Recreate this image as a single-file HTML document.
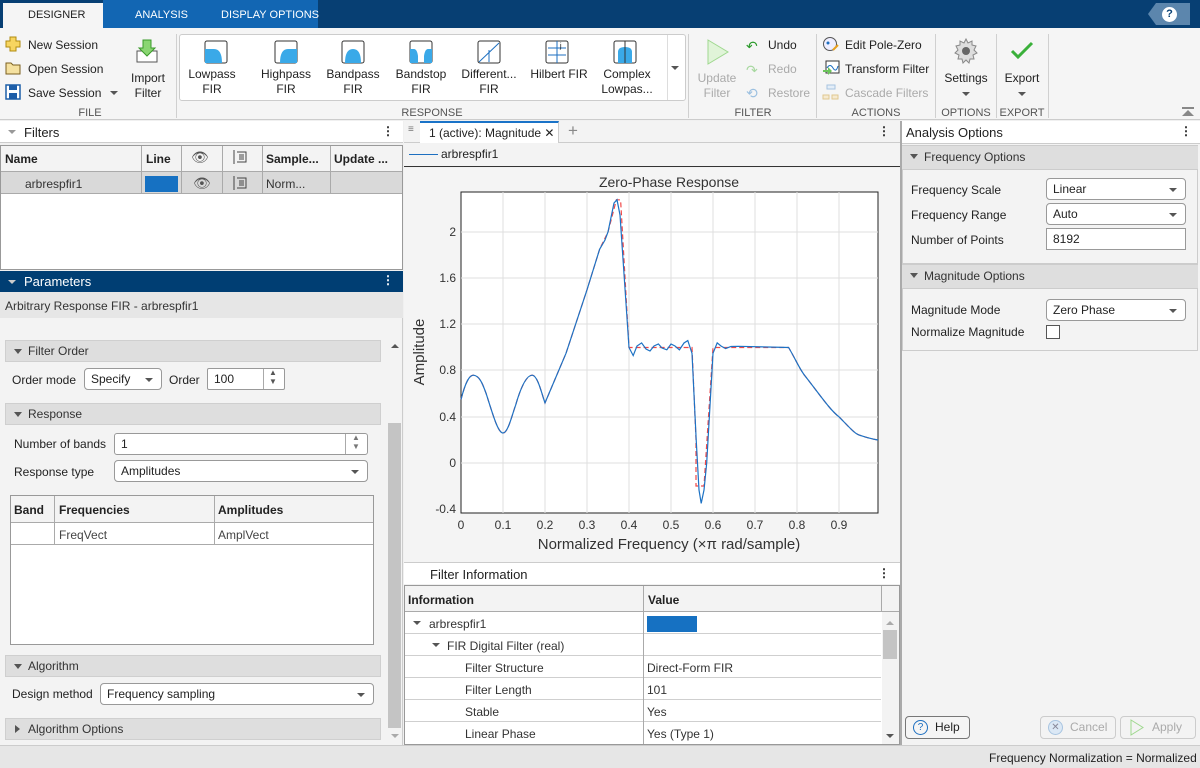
<!DOCTYPE html>
<html><head><meta charset="utf-8"><style>
*{box-sizing:border-box;margin:0;padding:0}
body{width:1200px;height:768px;position:relative;overflow:hidden;background:#f0f0f0;font-family:"Liberation Sans",Arial,sans-serif;font-size:12px;color:#222}
.a{position:absolute}
.t{position:absolute;white-space:nowrap}
.grp{position:absolute;top:107px;font-size:11px;color:#555;text-align:center}
.sep{position:absolute;top:34px;width:1px;height:84px;background:#d0d0d0}
.btn{position:absolute;text-align:center;font-size:12px;line-height:15px;color:#222}
.sec{position:absolute;background:#dedede;border:1px solid #cfcfcf;height:22px;font-size:12px;line-height:20px;padding-left:22px;color:#333}
.sec:before{content:"";position:absolute;left:8px;top:8px;border-left:4px solid transparent;border-right:4px solid transparent;border-top:5px solid #555}
.sec.cl:before{left:9px;top:6px;border-top:4px solid transparent;border-bottom:4px solid transparent;border-left:5px solid #555;border-right:none}
.dd{position:absolute;background:#fff;border:1px solid #999;border-radius:4px;height:22px;line-height:20px;padding-left:6px;font-size:12px}
.dd:after{content:"";position:absolute;right:8px;top:9px;border-left:4px solid transparent;border-right:4px solid transparent;border-top:4px solid #555}
.ed{position:absolute;background:#fff;border:1px solid #999;height:22px;line-height:20px;padding-left:6px}
.row{position:absolute;left:405px;width:476px;height:22px;border-bottom:1px solid #cfcfcf;background:#fff;line-height:21px}
</style></head><body>
<!-- top bar -->
<div class="a" style="left:0;top:0;width:1200px;height:28px;background:#073f73"></div>
<div class="a" style="left:103px;top:0;width:215px;height:28px;background:#1266b3"></div>
<div class="a" style="left:3px;top:3px;width:100px;height:26px;background:#f5f5f5"></div>
<div class="t" style="left:28px;top:9px;font-size:11px;color:#222">DESIGNER</div>
<div class="t" style="left:135px;top:9px;font-size:11px;color:#fff">ANALYSIS</div>
<div class="t" style="left:221px;top:9px;font-size:11px;color:#fff">DISPLAY OPTIONS</div>
<div class="a" style="left:1148px;top:3px;width:42px;height:22px;background:#5c86ad;clip-path:polygon(8px 0,100% 0,100% 100%,8px 100%,0 50%)"></div>
<div class="a" style="left:1162px;top:7px;width:15px;height:15px;border-radius:50%;background:#fff;color:#073f73;font-weight:bold;font-size:11px;text-align:center;line-height:15px">?</div>
<!-- toolstrip -->
<div class="a" style="left:0;top:28px;width:1200px;height:92px;background:#f5f5f5;border-bottom:1px solid #ccc"></div>
<svg class="a" style="left:5px;top:36px" width="16" height="16"><path d="M5 1h6v4h4v6h-4v4H5v-4H1V5h4z" fill="#f7d560" stroke="#b08a10"/></svg>
<div class="t" style="left:28px;top:38px">New Session</div>
<svg class="a" style="left:5px;top:60px" width="16" height="16"><path d="M1 3h5l2 2h7v9H1z" fill="#f5e1a0" stroke="#7a6020"/></svg>
<div class="t" style="left:28px;top:62px">Open Session</div>
<svg class="a" style="left:5px;top:84px" width="16" height="16"><rect x="1" y="1" width="14" height="14" fill="#fff" stroke="#1d5ea8" stroke-width="1.5"/><rect x="4" y="1" width="8" height="5" fill="#1d5ea8"/><rect x="4" y="9" width="8" height="6" fill="#1d5ea8"/></svg>
<div class="t" style="left:28px;top:86px">Save Session</div>
<div class="a" style="left:110px;top:91px;border-left:4px solid transparent;border-right:4px solid transparent;border-top:4px solid #555"></div>
<svg class="a" style="left:135px;top:38px" width="26" height="26"><rect x="2" y="13" width="20" height="11" fill="#fff" stroke="#555"/><path d="M8 2h8v8h4l-8 8-8-8h4z" fill="#8ad672" stroke="#3a9a2a"/></svg>
<div class="btn" style="left:125px;top:71px;width:46px">Import<br>Filter</div>
<div class="grp" style="left:70px;width:40px">FILE</div>
<div class="sep" style="left:176px"></div>
<div class="a" style="left:179px;top:34px;width:507px;height:67px;border:1px solid #ccc;border-radius:3px;background:#fff"></div>
<div class="a" style="left:667px;top:35px;width:18px;height:65px;border-left:1px solid #ddd"></div>
<div class="a" style="left:671px;top:66px;border-left:4px solid transparent;border-right:4px solid transparent;border-top:4px solid #555"></div>
<svg class="a" style="left:204px;top:40px" width="24" height="24"><rect x="1" y="1" width="22" height="22" rx="2" fill="#fff" stroke="#333"/><path d="M1 9h9q8 0 8 14H1z" fill="#3aa9e8"/></svg>
<svg class="a" style="left:274px;top:40px" width="24" height="24"><rect x="1" y="1" width="22" height="22" rx="2" fill="#fff" stroke="#333"/><path d="M23 9h-9q-8 0-8 14h17z" fill="#3aa9e8"/></svg>
<svg class="a" style="left:341px;top:40px" width="24" height="24"><rect x="1" y="1" width="22" height="22" rx="2" fill="#fff" stroke="#333"/><path d="M4 23q0-14 8-14t8 14z" fill="#3aa9e8"/></svg>
<svg class="a" style="left:409px;top:40px" width="24" height="24"><rect x="1" y="1" width="22" height="22" rx="2" fill="#fff" stroke="#333"/><path d="M1 9h4q3 0 4 7v7h6v-7q1-7 4-7h4v14H1z" fill="#3aa9e8"/></svg>
<svg class="a" style="left:477px;top:40px" width="24" height="24"><rect x="1" y="1" width="22" height="22" rx="2" fill="#fff" stroke="#333"/><path d="M2 22L22 3M12 10v12" stroke="#1d6fc0"/></svg>
<svg class="a" style="left:545px;top:40px" width="24" height="24"><rect x="1" y="1" width="22" height="22" rx="2" fill="#fff" stroke="#333"/><path d="M3 8h18M3 15h18M12 1v22" stroke="#1d6fc0"/><text x="15" y="8" font-size="7">j</text></svg>
<svg class="a" style="left:613px;top:40px" width="24" height="24"><rect x="1" y="1" width="22" height="22" rx="2" fill="#fff" stroke="#333"/><path d="M5 23V12q0-5 7-5t7 5v11z" fill="#3aa9e8"/><path d="M12 1v22" stroke="#333"/></svg>
<div class="btn" style="left:186px;top:67px;width:52px">Lowpass<br>FIR</div>
<div class="btn" style="left:256px;top:67px;width:60px">Highpass<br>FIR</div>
<div class="btn" style="left:324px;top:67px;width:58px">Bandpass<br>FIR</div>
<div class="btn" style="left:392px;top:67px;width:58px">Bandstop<br>FIR</div>
<div class="btn" style="left:458px;top:67px;width:62px">Different...<br>FIR</div>
<div class="btn" style="left:528px;top:67px;width:62px">Hilbert FIR</div>
<div class="btn" style="left:596px;top:67px;width:62px">Complex<br>Lowpas...</div>
<div class="grp" style="left:400px;width:64px">RESPONSE</div>
<div class="sep" style="left:688px"></div>
<svg class="a" style="left:706px;top:38px" width="24" height="28"><path d="M2 2l20 12L2 26z" fill="#e0f4d8" stroke="#9fd88f"/></svg>
<div class="btn" style="left:692px;top:71px;width:50px;color:#aaa">Update<br>Filter</div>
<div class="t" style="left:746px;top:38px;color:#2a9a2a;font-size:14px">↶</div><div class="t" style="left:768px;top:38px">Undo</div>
<div class="t" style="left:746px;top:62px;color:#a8d8a0;font-size:14px">↷</div><div class="t" style="left:768px;top:62px;color:#aaa">Redo</div>
<div class="t" style="left:746px;top:85px;color:#9cc0e0;font-size:14px">⟲</div><div class="t" style="left:768px;top:86px;color:#aaa">Restore</div>
<div class="grp" style="left:733px;width:40px">FILTER</div>
<div class="sep" style="left:816px"></div>
<svg class="a" style="left:822px;top:36px" width="18" height="16"><circle cx="8" cy="8" r="6.5" fill="#eef" stroke="#555"/><circle cx="6" cy="7" r="1.5" fill="#1d6fc0"/><path d="M11 14l5-5" stroke="#e8a020" stroke-width="2"/></svg>
<div class="t" style="left:845px;top:38px">Edit Pole-Zero</div>
<svg class="a" style="left:822px;top:60px" width="18" height="16"><rect x="4" y="1" width="13" height="12" fill="#fff" stroke="#333"/><path d="M5 8q3-5 6 0t5-2" stroke="#1d6fc0" fill="none"/><path d="M1 10h5v-3l4 4-4 4v-3H1z" fill="#6ac45a"/></svg>
<div class="t" style="left:845px;top:62px">Transform Filter</div>
<svg class="a" style="left:822px;top:84px" width="18" height="16"><rect x="5" y="1" width="8" height="4" fill="#e4eef8" stroke="#a8c4e0"/><rect x="1" y="11" width="6" height="4" fill="#f6ead0" stroke="#e0c890"/><rect x="10" y="11" width="6" height="4" fill="#f6ead0" stroke="#e0c890"/></svg>
<div class="t" style="left:845px;top:86px;color:#aaa">Cascade Filters</div>
<div class="grp" style="left:848px;width:56px">ACTIONS</div>
<div class="sep" style="left:935px"></div>
<svg class="a" style="left:953px;top:38px" width="26" height="26" viewBox="0 0 26 26"><path d="M13 1l2 4 4-2 0 4 4 1-2 4 3 3-4 2 1 4-4 0-1 4-3-3-3 3-1-4-4 0 1-4-4-2 3-3-2-4 4-1 0-4 4 2z" fill="#ddd" stroke="#888"/><circle cx="13" cy="13" r="4" fill="#666"/></svg>
<div class="btn" style="left:940px;top:71px;width:52px">Settings</div>
<div class="a" style="left:962px;top:92px;border-left:4px solid transparent;border-right:4px solid transparent;border-top:4px solid #555"></div>
<div class="grp" style="left:940px;width:52px">OPTIONS</div>
<div class="sep" style="left:996px"></div>
<svg class="a" style="left:1010px;top:40px" width="24" height="20"><path d="M2 11l6 6L22 3" stroke="#3ab03a" stroke-width="3" fill="none"/></svg>
<div class="btn" style="left:998px;top:71px;width:48px">Export</div>
<div class="a" style="left:1018px;top:92px;border-left:4px solid transparent;border-right:4px solid transparent;border-top:4px solid #555"></div>
<div class="grp" style="left:998px;width:48px">EXPORT</div>
<div class="sep" style="left:1048px"></div>
<div class="a" style="left:1182px;top:107px;width:12px;height:2px;background:#888"></div>
<div class="a" style="left:1182px;top:110px;border-left:6px solid transparent;border-right:6px solid transparent;border-bottom:6px solid #888"></div>

<!-- LEFT PANEL -->
<div class="a" style="left:0;top:121px;width:403px;height:22px;background:#fff;border-bottom:1px solid #ccc"></div>
<div class="a" style="left:8px;top:130px;border-left:4px solid transparent;border-right:4px solid transparent;border-top:4px solid #999"></div>
<div class="t" style="left:24px;top:125px;font-size:13px">Filters</div>
<div class="t" style="left:382px;top:124px;font-weight:bold">⋮</div>
<div class="a" style="left:0;top:145px;width:403px;height:125px;background:#fff;border:1px solid #999"></div>
<div class="a" style="left:1px;top:146px;width:401px;height:26px;background:#f3f3f3;border-bottom:1px solid #aaa"></div>
<div class="a" style="left:1px;top:172px;width:401px;height:22px;background:#d9d9d9;border-bottom:1px solid #aaa"></div>
<div class="a" style="left:141px;top:146px;width:1px;height:48px;background:#aaa"></div>
<div class="a" style="left:181px;top:146px;width:1px;height:48px;background:#aaa"></div>
<div class="a" style="left:222px;top:146px;width:1px;height:48px;background:#aaa"></div>
<div class="a" style="left:262px;top:146px;width:1px;height:48px;background:#aaa"></div>
<div class="a" style="left:330px;top:146px;width:1px;height:48px;background:#aaa"></div>
<div class="t" style="left:5px;top:152px;font-weight:bold">Name</div>
<div class="t" style="left:146px;top:152px;font-weight:bold">Line</div>
<div class="t" style="left:191px;top:149px;font-size:14px;color:#555">👁</div>
<div class="t" style="left:266px;top:152px;font-weight:bold">Sample...</div>
<div class="t" style="left:334px;top:152px;font-weight:bold">Update ...</div>
<div class="t" style="left:25px;top:177px;color:#333">arbrespfir1</div>
<div class="a" style="left:145px;top:176px;width:33px;height:16px;background:#1671c2"></div>
<div class="t" style="left:193px;top:175px;font-size:14px;color:#555">👁</div>
<svg class="a" style="left:232px;top:149px" width="16" height="16"><path d="M2 1v14M5 3h9v10H5M7 6h5M7 8h5M7 10h5" stroke="#444" fill="none"/></svg>
<svg class="a" style="left:232px;top:175px" width="16" height="16"><path d="M2 1v14M5 3h9v10H5M7 6h5M7 8h5M7 10h5" stroke="#444" fill="none"/></svg>
<div class="t" style="left:266px;top:177px;color:#333">Norm...</div>

<div class="a" style="left:0;top:271px;width:403px;height:21px;background:#003e73"></div>
<div class="a" style="left:8px;top:280px;border-left:4px solid transparent;border-right:4px solid transparent;border-top:4px solid #ccc"></div>
<div class="t" style="left:24px;top:274px;font-size:13px;color:#fff">Parameters</div>
<div class="t" style="left:382px;top:273px;color:#fff;font-weight:bold">⋮</div>
<div class="a" style="left:0;top:292px;width:403px;height:26px;background:#e6e6e6"></div>
<div class="t" style="left:5px;top:299px;color:#333">Arbitrary Response FIR - arbrespfir1</div>
<div class="a" style="left:0;top:318px;width:403px;height:427px;background:#f3f3f3;border-right:1px solid #ccc"></div>
<div class="a" style="left:386px;top:338px;width:16px;height:406px;background:#f3f3f3"></div>
<div class="a" style="left:388px;top:423px;width:13px;height:305px;background:#c4c4c4"></div>
<div class="a" style="left:391px;top:344px;border-left:4px solid transparent;border-right:4px solid transparent;border-bottom:4px solid #555"></div>
<div class="a" style="left:391px;top:734px;border-left:4px solid transparent;border-right:4px solid transparent;border-top:4px solid #aaa"></div>

<div class="sec" style="left:5px;top:340px;width:376px">Filter Order</div>
<div class="t" style="left:12px;top:373px">Order mode</div>
<div class="dd" style="left:84px;top:368px;width:78px">Specify</div>
<div class="t" style="left:169px;top:373px">Order</div>
<div class="ed" style="left:207px;top:368px;width:78px;border-radius:2px">100</div>
<div class="a" style="left:263px;top:369px;width:1px;height:20px;background:#aaa"></div>
<div class="t" style="left:269px;top:368px;font-size:8px;color:#555">▲<br>▼</div>
<div class="sec" style="left:5px;top:403px;width:376px">Response</div>
<div class="t" style="left:14px;top:437px">Number of bands</div>
<div class="ed" style="left:114px;top:433px;width:254px;border-radius:3px">1</div>
<div class="a" style="left:345px;top:434px;width:1px;height:20px;background:#aaa"></div>
<div class="t" style="left:352px;top:433px;font-size:8px;color:#777">▲<br>▼</div>
<div class="t" style="left:14px;top:465px">Response type</div>
<div class="dd" style="left:114px;top:460px;width:254px">Amplitudes</div>
<div class="a" style="left:10px;top:495px;width:364px;height:150px;background:#fff;border:1px solid #999"></div>
<div class="a" style="left:11px;top:496px;width:362px;height:27px;background:#f3f3f3;border-bottom:1px solid #aaa"></div>
<div class="a" style="left:11px;top:523px;width:362px;height:22px;border-bottom:1px solid #aaa"></div>
<div class="a" style="left:54px;top:496px;width:1px;height:49px;background:#aaa"></div>
<div class="a" style="left:214px;top:496px;width:1px;height:49px;background:#aaa"></div>
<div class="t" style="left:14px;top:503px;font-weight:bold">Band</div>
<div class="t" style="left:59px;top:503px;font-weight:bold">Frequencies</div>
<div class="t" style="left:218px;top:503px;font-weight:bold">Amplitudes</div>
<div class="t" style="left:59px;top:528px;color:#444">FreqVect</div>
<div class="t" style="left:218px;top:528px;color:#444">AmplVect</div>
<div class="sec" style="left:5px;top:655px;width:376px">Algorithm</div>
<div class="t" style="left:12px;top:687px">Design method</div>
<div class="dd" style="left:100px;top:683px;width:274px">Frequency sampling</div>
<div class="sec cl" style="left:5px;top:718px;width:376px">Algorithm Options</div>

<!-- MIDDLE -->
<div class="a" style="left:404px;top:121px;width:496px;height:22px;background:#f3f3f3;border-bottom:1px solid #ccc"></div>
<div class="t" style="left:408px;top:124px;color:#777;font-size:10px">≡</div>
<div class="a" style="left:420px;top:121px;width:139px;height:23px;background:#fff;border-top:2px solid #1a73c8;border-right:1px solid #ccc"></div>
<div class="t" style="left:429px;top:126px;color:#222">1 (active): Magnitude ✕</div>
<div class="t" style="left:568px;top:121px;font-size:17px;color:#888">+</div>
<div class="t" style="left:878px;top:124px;font-weight:bold">⋮</div>
<div class="a" style="left:404px;top:143px;width:496px;height:24px;background:#f3f3f3;border-bottom:1px solid #333"></div>
<div class="a" style="left:409px;top:154px;width:29px;height:1px;background:#1d6fc0"></div>
<div class="t" style="left:441px;top:147px;color:#222">arbrespfir1</div>
<div class="a" style="left:404px;top:168px;width:496px;height:394px;background:#f4f4f4"></div>
<svg class="a" style="left:404px;top:168px" width="496" height="394" viewBox="404 168 496 394">
<rect x="461" y="192" width="417" height="321" fill="#fff" stroke="#222"/>
<g stroke="#dfdfdf">
<path d="M503 192v321M545 192v321M587 192v321M629 192v321M671 192v321M713 192v321M755 192v321M797 192v321M839 192v321"/>
<path d="M461 232h417M461 278h417M461 324h417M461 370h417M461 417h417M461 463h417"/>
</g>
<g font-family="Liberation Sans,sans-serif" font-size="12" fill="#333" text-anchor="middle">
<text x="461" y="529">0</text><text x="503" y="529">0.1</text><text x="545" y="529">0.2</text><text x="587" y="529">0.3</text><text x="629" y="529">0.4</text><text x="671" y="529">0.5</text><text x="713" y="529">0.6</text><text x="755" y="529">0.7</text><text x="797" y="529">0.8</text><text x="839" y="529">0.9</text>
<text x="669" y="549" font-size="15">Normalized Frequency (×π rad/sample)</text>
<text x="669" y="187" font-size="14">Zero-Phase Response</text>
<g text-anchor="end"><text x="456" y="236">2</text><text x="456" y="282">1.6</text><text x="456" y="328">1.2</text><text x="456" y="374">0.8</text><text x="456" y="421">0.4</text><text x="456" y="467">0</text><text x="456" y="513">-0.4</text></g>
<text x="424" y="352" font-size="15" transform="rotate(-90 424 352)">Amplitude</text>
</g>
<path d="M461 399.5 C466 380 470 375 473.6 375.2 C480 376 483 385 486.2 393.7 C493 415 498 433 503 433 C508 433 512 415 515.6 405.3 C520 390 526 375 532.4 375.2 C538 376 542 395 545 402.9 L566 353.3 L587 289.8 L599.6 249.3 L608 232 L616.4 199.7 L620.6 200 L629 347.5 L671 347.5 L692 347.5 L696 440 L696 486 L704 486 L713 347.5 L788.6 347.5 C796 360 800 370 805.4 376.4 C820 395 830 410 839 416.8 C850 428 855 434 860 435.3 C868 438 872 439 878 440" fill="none" stroke="#f04848" stroke-width="1.2" stroke-dasharray="5 3"/>
<path d="M461 399.5 C466 380 470 375 473.6 375.2 C480 376 483 385 486.2 393.7 C493 415 498 433 503 433 C508 433 512 415 515.6 405.3 C520 390 526 375 532.4 375.2 C538 376 542 395 545 402.9 L566 353.3 L587 289.8 L599.6 249.3 L605 240 L608 232 L614 203 L617 199.7 L620 215 L629 347.5 L633.2 355.6 L637 346 L641.6 342.9 L646 349 L650 351 L654 346 L658.4 344 L662 348 L666.8 349.8 L671 344 L675 346 L679.4 349.8 L684 343 L687.8 340.6 L692 353.3 L696.2 439.9 L699 490 L701.2 503.4 L704 490 L706.7 463 L713 353.3 L717.2 342.9 L721 346 L725.6 348.6 L731 346.5 L738.2 346.3 L788.6 347.5 C796 360 800 370 805.4 376.4 C820 395 830 410 839 416.8 C850 428 855 434 860 435.3 C868 438 872 439 878 440" fill="none" stroke="#1d72c4" stroke-width="1.2"/>
</svg>
<!-- filter information -->
<div class="a" style="left:404px;top:562px;width:496px;height:22px;background:#fff;border-top:1px solid #ccc"></div>
<div class="t" style="left:430px;top:567px;font-size:13px;color:#222">Filter Information</div>
<div class="t" style="left:878px;top:566px;font-weight:bold">⋮</div>
<div class="a" style="left:404px;top:585px;width:496px;height:160px;background:#fff;border:1px solid #999"></div>
<div class="a" style="left:405px;top:586px;width:494px;height:26px;background:#f3f3f3;border-bottom:1px solid #aaa"></div>
<div class="a" style="left:643px;top:586px;width:1px;height:158px;background:#aaa"></div>
<div class="a" style="left:881px;top:586px;width:1px;height:26px;background:#aaa"></div>
<div class="t" style="left:408px;top:593px;font-weight:bold">Information</div>
<div class="t" style="left:648px;top:593px;font-weight:bold">Value</div>
<div class="row" style="top:612px"></div><div class="row" style="top:634px"></div><div class="row" style="top:656px"></div><div class="row" style="top:678px"></div><div class="row" style="top:700px"></div><div class="row" style="top:722px;border-bottom:none"></div>
<div class="a" style="left:643px;top:612px;width:1px;height:132px;background:#aaa"></div>
<div class="a" style="left:413px;top:621px;border-left:4px solid transparent;border-right:4px solid transparent;border-top:4px solid #555"></div>
<div class="t" style="left:429px;top:617px;color:#333">arbrespfir1</div>
<div class="a" style="left:647px;top:616px;width:50px;height:16px;background:#1671c2"></div>
<div class="a" style="left:432px;top:643px;border-left:4px solid transparent;border-right:4px solid transparent;border-top:4px solid #555"></div>
<div class="t" style="left:447px;top:639px;color:#333">FIR Digital Filter (real)</div>
<div class="t" style="left:465px;top:661px;color:#333">Filter Structure</div><div class="t" style="left:647px;top:661px;color:#333">Direct-Form FIR</div>
<div class="t" style="left:465px;top:683px;color:#333">Filter Length</div><div class="t" style="left:647px;top:683px;color:#333">101</div>
<div class="t" style="left:465px;top:705px;color:#333">Stable</div><div class="t" style="left:647px;top:705px;color:#333">Yes</div>
<div class="t" style="left:465px;top:727px;color:#333">Linear Phase</div><div class="t" style="left:647px;top:727px;color:#333">Yes (Type 1)</div>
<div class="a" style="left:882px;top:612px;width:17px;height:132px;background:#f3f3f3"></div>
<div class="a" style="left:883px;top:630px;width:14px;height:29px;background:#c4c4c4"></div>
<div class="a" style="left:886px;top:621px;border-left:4px solid transparent;border-right:4px solid transparent;border-bottom:4px solid #aaa"></div>
<div class="a" style="left:886px;top:734px;border-left:4px solid transparent;border-right:4px solid transparent;border-top:4px solid #555"></div>

<!-- RIGHT -->
<div class="a" style="left:900px;top:121px;width:300px;height:624px;background:#f3f3f3;border-left:2px solid #aaa"></div>
<div class="a" style="left:902px;top:121px;width:298px;height:23px;background:#fff;border-bottom:1px solid #ccc"></div>
<div class="t" style="left:906px;top:125px;font-size:13px">Analysis Options</div>
<div class="t" style="left:1180px;top:124px;font-weight:bold">⋮</div>
<div class="a" style="left:902px;top:145px;width:296px;height:206px;border:1px solid #ccc;background:#f3f3f3"></div>
<div class="sec" style="left:902px;top:146px;width:296px;border:none;border-bottom:1px solid #ccc;height:24px;line-height:23px">Frequency Options</div>
<div class="t" style="left:911px;top:183px">Frequency Scale</div>
<div class="dd" style="left:1046px;top:178px;width:140px">Linear</div>
<div class="t" style="left:911px;top:208px">Frequency Range</div>
<div class="dd" style="left:1046px;top:203px;width:140px">Auto</div>
<div class="t" style="left:911px;top:233px">Number of Points</div>
<div class="ed" style="left:1046px;top:228px;width:140px">8192</div>
<div class="a" style="left:902px;top:263px;width:296px;height:2px;background:#ccc"></div>
<div class="sec" style="left:902px;top:265px;width:296px;border:none;border-bottom:1px solid #ccc;height:24px;line-height:23px">Magnitude Options</div>
<div class="t" style="left:911px;top:303px">Magnitude Mode</div>
<div class="dd" style="left:1046px;top:299px;width:140px">Zero Phase</div>
<div class="t" style="left:911px;top:325px">Normalize Magnitude</div>
<div class="a" style="left:1046px;top:325px;width:14px;height:14px;background:#fff;border:1px solid #555"></div>
<div class="a" style="left:905px;top:716px;width:65px;height:23px;border:1px solid #777;border-radius:4px;background:#f5f5f5"></div>
<div class="a" style="left:913px;top:720px;width:15px;height:15px;border:1px solid #1d6fc0;border-radius:50%;color:#1d6fc0;font-size:10px;text-align:center;line-height:13px">?</div>
<div class="t" style="left:935px;top:720px">Help</div>
<div class="a" style="left:1040px;top:716px;width:76px;height:23px;border:1px solid #ccc;border-radius:4px"></div>
<div class="a" style="left:1048px;top:720px;width:15px;height:15px;border:1px solid #a8c4e0;border-radius:50%;background:#dbe8f5;color:#889;font-size:10px;text-align:center;line-height:13px">✕</div>
<div class="t" style="left:1070px;top:720px;color:#aaa">Cancel</div>
<div class="a" style="left:1120px;top:716px;width:76px;height:23px;border:1px solid #ccc;border-radius:4px"></div>
<svg class="a" style="left:1130px;top:719px" width="14" height="17"><path d="M1 1l12 7.5L1 16z" fill="none" stroke="#9fd88f"/></svg>
<div class="t" style="left:1152px;top:720px;color:#aaa">Apply</div>

<!-- status -->
<div class="a" style="left:0;top:745px;width:1200px;height:23px;background:#e6e6e6;border-top:1px solid #ccc"></div>
<div class="t" style="left:989px;top:751px;color:#222">Frequency Normalization = Normalized</div>
</body></html>
